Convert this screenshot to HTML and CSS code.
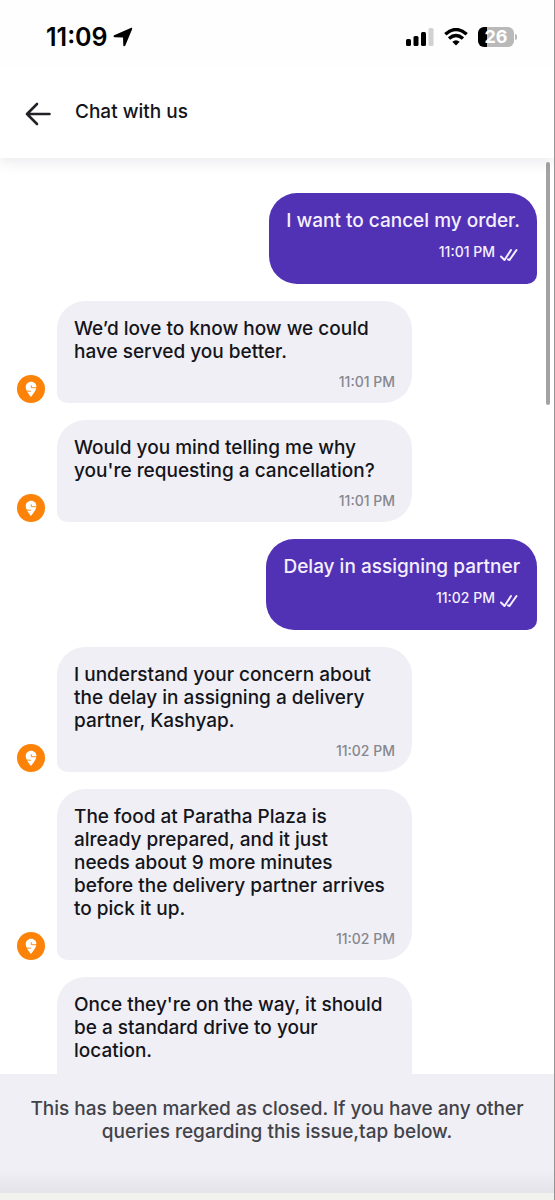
FILE: index.html
```html
<!DOCTYPE html>
<html lang="en">
<head>
<meta charset="utf-8">
<meta name="viewport" content="width=device-width, initial-scale=1">
<title>Chat with us</title>
<link rel="stylesheet" href="styles.css">
</head>
<body>
<svg class="defs" aria-hidden="true">
  <symbol id="pin" viewBox="0 0 28 28">
    <circle cx="14" cy="14" r="14" fill="#fc8208"/>
    <path fill="#fff" d="M14.200 6.800c-3.200 0-5.500 2.300-5.500 5.200 0 3.300 2.700 6.800 5.200 9.900 2.600-3.100 5.500-6.600 5.500-9.900 0-2.900-2.200-5.200-5.200-5.200z"/>
    <path d="M14.300 10.300v2.400h5.500M9.300 16l4.700.3" fill="none" stroke="#fc8208" stroke-width=".9"/>
  </symbol>
  <symbol id="ticks" viewBox="0 0 18 14">
    <path d="M1 8.500l3.500 3.500L11 2M8 11.300l1.500.7L16.500 2" fill="none" stroke="currentColor" stroke-width="2" stroke-linecap="round" stroke-linejoin="round"/>
  </symbol>
</svg>
<div class="app">
  <div class="status">
    <div class="clock"><span>11:09</span>
      <svg class="location" viewBox="0 0 20 20" aria-hidden="true"><path d="M1.200 8.200L17.800.9c1-.4 1.700.3 1.300 1.300L12.300 18.500c-.5 1.100-2 .9-2-.3L10 10.400l-8.200-.1c-1.400 0-1.700-1.600-.6-2.100z"/></svg>
    </div>
    <div class="indicators">
      <svg class="signal" viewBox="0 0 28 18" aria-hidden="true"><rect y="11" width="5" height="7" rx="1.500"/><rect x="7.500" y="8" width="5" height="10" rx="1.500"/><rect x="15" y="4" width="5" height="14" rx="1.500"/><rect x="22.500" width="5" height="18" rx="1.500" fill="#d2d2d2"/></svg>
      <svg class="wifi" viewBox="0 0 24 18" aria-hidden="true"><g fill="none" stroke="#000" stroke-width="3.400"><path d="M1.300 6.300Q12-3.200 22.700 6.300"/><path d="M5 10.500q7-6 14 0"/></g><path d="M8.300 13.700q3.700-3 7.400 0L12 17.500z"/></svg>
      <div class="battery"><span>26</span></div>
    </div>
  </div>
  <header class="header">
    <button class="back" type="button" aria-label="Back"><svg viewBox="0 0 26 24"><path d="M12 2L2 12l10 10M2 12h22.500" fill="none" stroke="#202226" stroke-width="2.600" stroke-linecap="round" stroke-linejoin="round"/></svg></button>
    <h1 class="title">Chat with us</h1>
  </header>
  <main class="chat">
    <div class="thumb"></div>
    <div class="row sent"><div class="bubble"><p>I want to cancel my order.</p><div class="meta"><time>11:01 PM</time><svg class="ticks"><use href="#ticks"/></svg></div></div></div>
    <div class="row"><svg class="avatar"><use href="#pin"/></svg><div class="bubble"><p>We’d love to know how we could<br>have served you better.</p><div class="meta"><time>11:01 PM</time></div></div></div>
    <div class="row"><svg class="avatar"><use href="#pin"/></svg><div class="bubble"><p>Would you mind telling me why<br>you're requesting a cancellation?</p><div class="meta"><time>11:01 PM</time></div></div></div>
    <div class="row sent"><div class="bubble"><p>Delay in assigning partner</p><div class="meta"><time>11:02 PM</time><svg class="ticks"><use href="#ticks"/></svg></div></div></div>
    <div class="row"><svg class="avatar"><use href="#pin"/></svg><div class="bubble"><p>I understand your concern about<br>the delay in assigning a delivery<br>partner, Kashyap.</p><div class="meta"><time>11:02 PM</time></div></div></div>
    <div class="row"><svg class="avatar"><use href="#pin"/></svg><div class="bubble"><p>The food at Paratha Plaza is<br>already prepared, and it just<br>needs about 9 more minutes<br>before the delivery partner arrives<br>to pick it up.</p><div class="meta"><time>11:02 PM</time></div></div></div>
    <div class="row"><svg class="avatar"><use href="#pin"/></svg><div class="bubble partial"><p>Once they're on the way, it should<br>be a standard drive to your<br>location.</p></div></div>
  </main>
  <footer class="closed"><p>This has been marked as closed. If you have any other<br>queries regarding this issue,tap below.</p></footer>
</div>
</body>
</html>
```
FILE: styles.css
```css
* { box-sizing: border-box; }
body { margin: 0; background: #fff; color: #14151b; font-family: Inter, "Liberation Sans", sans-serif; }
p, h1 { margin: 0; }
.defs { position: absolute; width: 0; height: 0; }
.app { display: flex; flex-direction: column; height: 100vh; border-right: 1px solid #949494; }

.status { flex: none; display: flex; justify-content: space-between; align-items: center; height: 66px; padding: 8px 38px 0 46px; background: #fefefe; }
.clock { display: flex; align-items: center; gap: 5px; font-size: 25px; line-height: 28px; font-weight: 600; color: #000; }
.location { width: 20px; height: 20px; }
.indicators { display: flex; align-items: center; gap: 10px; }
.signal { width: 28px; height: 18px; }
.wifi { width: 24px; height: 18px; }
.battery { position: relative; width: 36px; height: 20px; margin-right: 2px; border-radius: 6px; background: linear-gradient(90deg, #000 9px, #b9b9b9 9px); color: #fff; font-size: 18px; line-height: 20px; font-weight: 700; text-align: center; }
.battery::after { content: ""; position: absolute; left: 37px; top: 7px; width: 2px; height: 6px; border-radius: 0 2px 2px 0; background: #b9b9b9; }

.header { flex: none; position: relative; z-index: 1; display: flex; align-items: center; gap: 24px; height: 92px; padding: 0 25px; background: #fff; box-shadow: 0 3px 14px rgba(40, 40, 70, .11); clip-path: inset(0 0 -24px); }
.back { display: flex; padding: 3px 0 0; border: 0; background: none; }
.back svg { width: 26px; height: 24px; }
.title { font-size: 19px; line-height: 24px; font-weight: 500; }

.chat { position: relative; flex: 1; min-height: 0; overflow: hidden; display: flex; flex-direction: column; gap: 17px; padding: 35px 17px 0; }
.thumb { position: absolute; top: 4px; right: 4px; width: 4px; height: 243px; border-radius: 2px; background: #a3a3a3; }
.row { flex: none; display: flex; align-items: flex-end; gap: 12px; }
.avatar { flex: none; width: 28px; height: 28px; }
.bubble { width: 355px; padding: 16px 17px 11px; border-radius: 28px 28px 28px 10px; background: #f0eff5; font-size: 19px; line-height: 23px; font-weight: 500; }
.partial { min-height: 148px; }
.meta { display: flex; justify-content: flex-end; align-items: center; gap: 5px; margin-top: 9px; font-size: 14px; line-height: 20px; color: #86878e; }
.sent { justify-content: flex-end; }
.sent .bubble { width: auto; padding-bottom: 22px; border-radius: 28px 28px 10px 28px; background: #5132b4; color: #f5efff; }
.sent .meta { margin-top: 10px; padding-right: 2px; color: #f5efff; }
.ticks { width: 18px; height: 14px; margin-top: 6px; }

.closed { flex: none; height: 126px; padding: 23px 16px 0; border-bottom: 7px solid #f1f1ee; background: linear-gradient(#f0eff5 80%, #e4e3ea); color: #424349; font-size: 19px; line-height: 23px; font-weight: 500; text-align: center; }
```
